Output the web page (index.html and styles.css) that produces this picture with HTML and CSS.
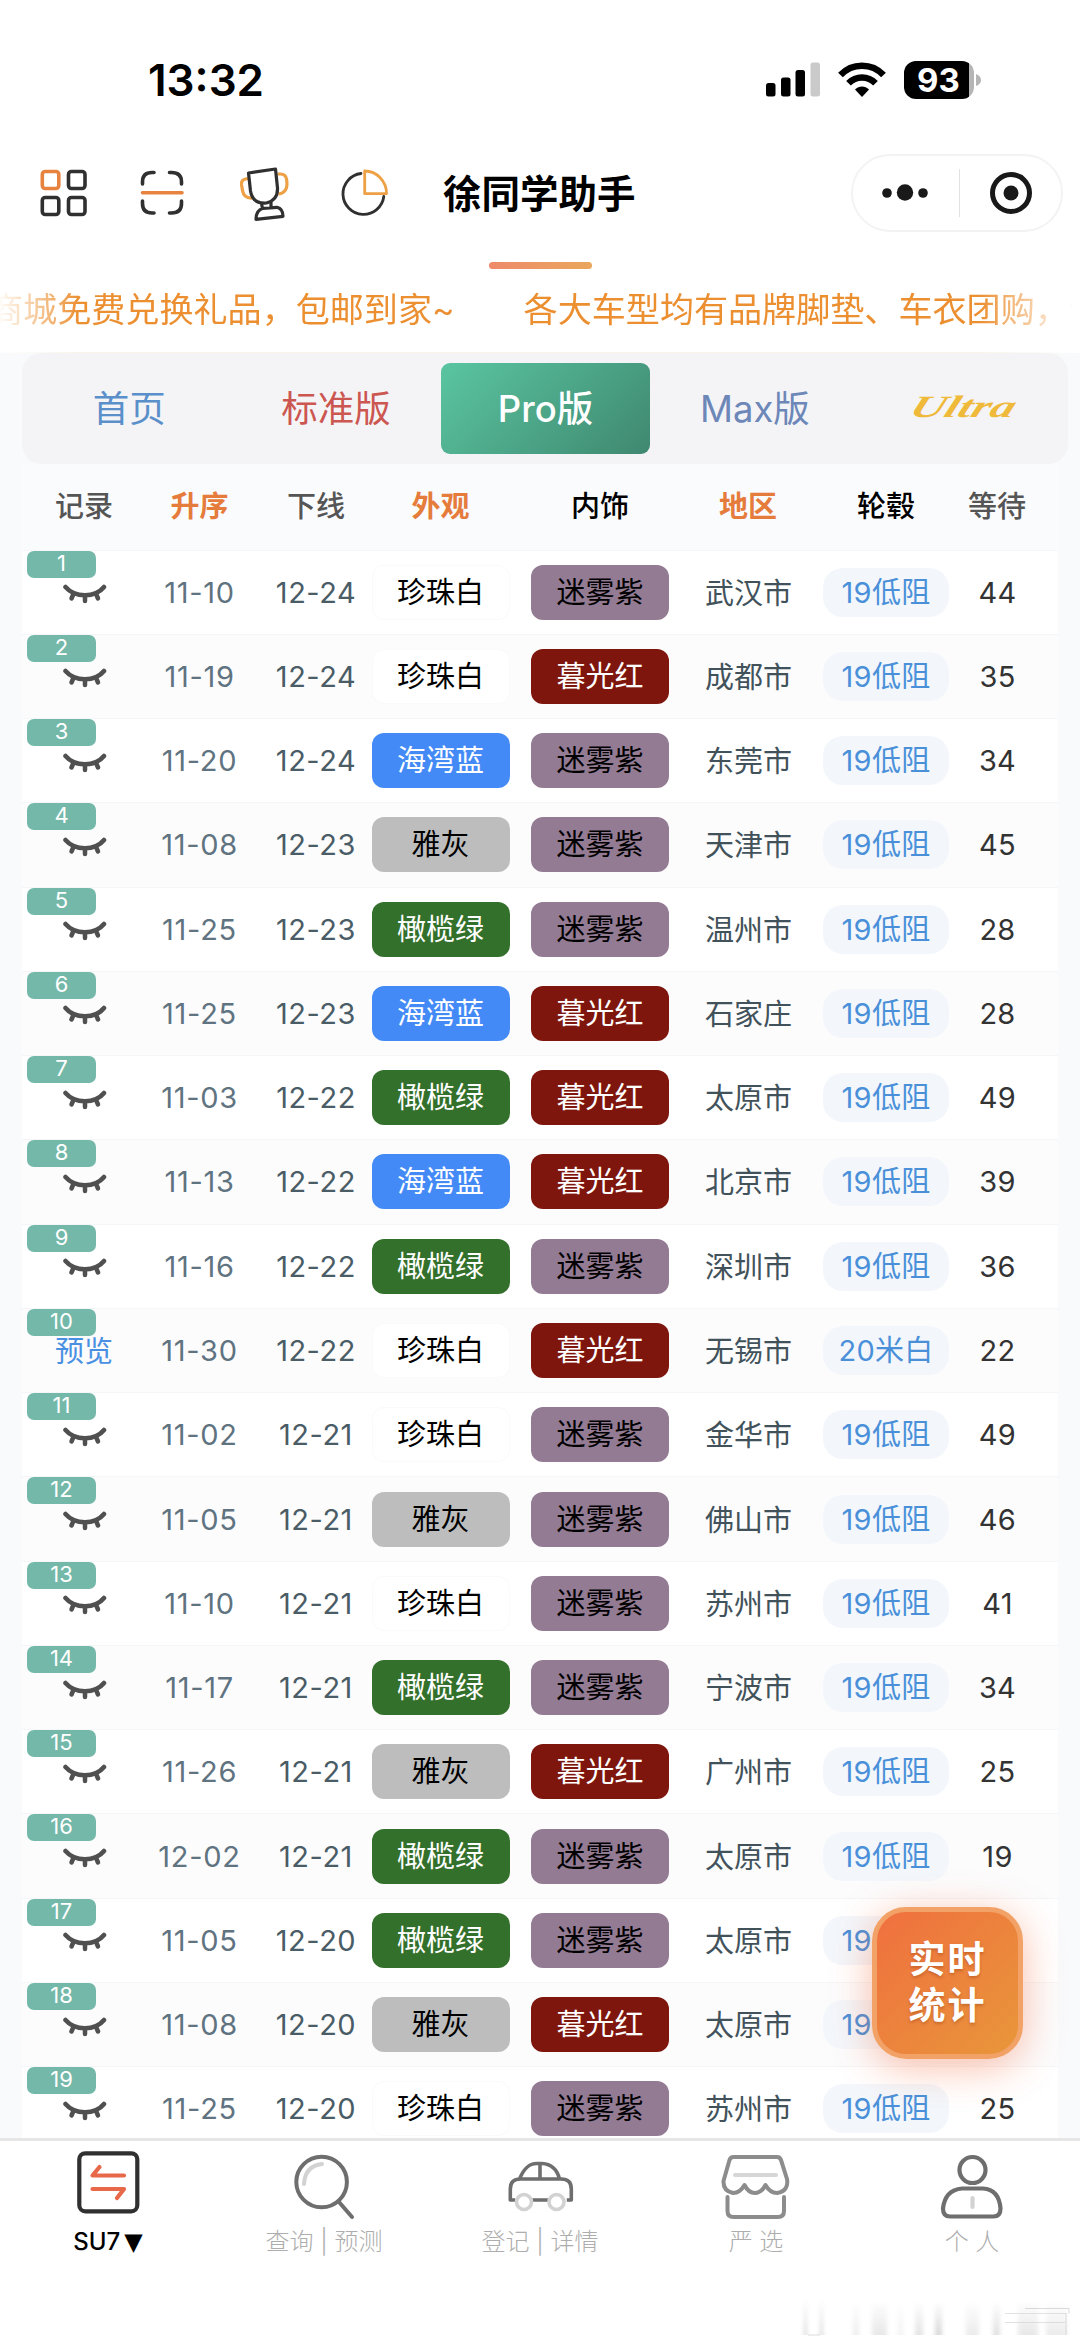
FILE: index.html
```html
<!DOCTYPE html>
<html lang="zh-CN">
<head>
    <meta charset="UTF-8">
    <meta name="viewport" content="width=device-width, initial-scale=1.0">
    <title>徐同学助手</title>
    <link rel="stylesheet" href="styles.css">
</head>
<body>
    <svg width="0" height="0" class="defs">
        <symbol id="eye" viewBox="0 0 44 20">
            <g fill="none" stroke="#505050" stroke-width="4.500" stroke-linecap="round">
                <path d="M2.500 3C12 14 32 14 41 3"></path>
                <path d="M10 11l-1.500 3.500M22 12.500v4.500M33.500 11l1.500 3.500"></path>
            </g>
        </symbol>
    </svg>

    <!-- 状态栏 -->
    <div class="status-bar">
        <div class="time">13:32</div>
        <div class="status-icons">
            <svg width="54" height="36" viewBox="0 0 54 36">
                <rect x="0" y="21" width="9.500" height="13.500" rx="2.500"></rect>
                <rect x="15" y="15.500" width="9.500" height="19" rx="2.500"></rect>
                <rect x="29.500" y="8" width="9.500" height="26.500" rx="2.500"></rect>
                <rect x="44.500" y="0.500" width="9.500" height="34" rx="2.500" fill="#cacaca"></rect>
            </svg>
            <svg class="wifi" width="48" height="36" viewBox="0 0 48 36">
                <g fill="none" stroke="#000" stroke-width="6.500">
                    <path d="M2.500 13C14 0.500 34 0.500 45.500 13"></path>
                    <path d="M10.500 21.300C18 13.700 30 13.700 37.500 21.300"></path>
                </g>
                <path d="M24 35l-7-7.500c4-4 10-4 14 0z"></path>
            </svg>
            <div class="battery"><span>93</span></div>
            <svg class="nub" width="5" height="12" viewBox="0 0 5 12"><path d="M0 0q5 2 5 6t-5 6z" fill="#b5b5b5"></path></svg>
        </div>
    </div>

    <!-- 导航栏 -->
    <div class="nav-bar">
        <div class="nav-icons">
            <svg width="50" height="56" viewBox="0 0 50 56" fill="none" stroke="#303030" stroke-width="3.600">
                <rect x="3.300" y="6.500" width="16.500" height="17" rx="3" stroke="#e8833f"></rect>
                <rect x="29.500" y="6.500" width="16.500" height="17" rx="3"></rect>
                <rect x="3.300" y="32.500" width="16.500" height="17" rx="3"></rect>
                <rect x="29.500" y="32.500" width="16.500" height="17" rx="3"></rect>
            </svg>
            <svg width="50" height="56" viewBox="0 0 50 56" fill="none" stroke="#303030" stroke-width="3.600" stroke-linecap="round">
                <path d="M4.500 19v-2q0-9.500 9.500-9.500h2M31.500 7.500h2q10 0 10 9.500v2M4.500 36v2.500q0 9.500 9.500 9.500h2M31.500 48h2q10 0 10-9.500v-2.500"></path>
                <path d="M4.500 27.800h39.500" stroke="#e8833f"></path>
            </svg>
            <svg width="54" height="56" viewBox="0 0 54 56" fill="none" stroke="#303030" stroke-width="3.200" stroke-linejoin="round">
                <path d="M11.500 13.500l-3 .5q-4.500 1-4 5.500l1 6q1.500 8 9.500 7.500" stroke="#eea044"></path>
                <path d="M40.500 9h3q5 0 6 5 2.500 13.500-8 15" stroke="#eea044"></path>
                <path d="M11.500 8l27-4 2 19q.5 12-11 15-14 1-16-12z"></path>
                <path d="M24.500 38l1 6M34 37v6M19 54.300l27-3q0-7.500-6-9l-14 1q-7 2-7 11z"></path>
            </svg>
            <svg width="50" height="56" viewBox="0 0 50 56" fill="none" stroke="#303030" stroke-width="2.800" stroke-linecap="round" stroke-linejoin="round">
                <path d="M21 8.500A20.500 20.500 0 1 0 43.800 31.500"></path>
                <path d="M24.700 6v22.700h21.800A22 22.500 0 0 0 24.700 6z" stroke="#eea044"></path>
            </svg>
        </div>
        <h1 class="nav-title">徐同学助手</h1>
        <div class="capsule">
            <svg width="46" height="18" viewBox="0 0 46 18" fill="#191919">
                <circle cx="5" cy="9" r="4.800"></circle>
                <circle cx="23" cy="8.500" r="8.200"></circle>
                <circle cx="41" cy="9" r="4.800"></circle>
            </svg>
            <span class="capsule-line"></span>
            <svg width="42" height="42" viewBox="0 0 42 42">
                <circle cx="21" cy="21" r="18.500" fill="none" stroke="#191919" stroke-width="5"></circle>
                <circle cx="21" cy="21" r="7.500" fill="#191919"></circle>
            </svg>
        </div>
    </div>
    <div class="indicator"></div>

    <!-- 滚动公告 -->
    <div class="notice">
        <span>商城免费兑换礼品，包邮到家~</span>
        <span>各大车型均有品牌脚垫、车衣团购，详</span>
    </div>

    <div class="content">
        <div class="tabs">
            <div class="tab home">首页</div>
            <div class="tab standard">标准版</div>
            <div class="tab active">Pro版</div>
            <div class="tab max">Max版</div>
            <div class="tab ultra"><span>Ultra</span></div>
        </div>

        <div class="table">
            <div class="row head">
                <div>记录</div>
                <div class="sort">升序</div>
                <div class="off">下线</div>
                <div class="sort">外观</div>
                <div class="dark">内饰</div>
                <div class="sort">地区</div>
                <div class="dark">轮毂</div>
                <div>等待</div>
            </div>
            <div class="row">
                <div class="record"><span class="num">1</span><svg class="eye"><use href="#eye"></use></svg></div>
                <div class="date">11-10</div><div class="off">12-24</div>
                <div class="chip white">珍珠白</div><div class="chip purple">迷雾紫</div>
                <div class="city">武汉市</div><div class="wheel">19低阻</div><div class="wait">44</div>
            </div>
            <div class="row">
                <div class="record"><span class="num">2</span><svg class="eye"><use href="#eye"></use></svg></div>
                <div class="date">11-19</div><div class="off">12-24</div>
                <div class="chip white">珍珠白</div><div class="chip red">暮光红</div>
                <div class="city">成都市</div><div class="wheel">19低阻</div><div class="wait">35</div>
            </div>
            <div class="row">
                <div class="record"><span class="num">3</span><svg class="eye"><use href="#eye"></use></svg></div>
                <div class="date">11-20</div><div class="off">12-24</div>
                <div class="chip blue">海湾蓝</div><div class="chip purple">迷雾紫</div>
                <div class="city">东莞市</div><div class="wheel">19低阻</div><div class="wait">34</div>
            </div>
            <div class="row">
                <div class="record"><span class="num">4</span><svg class="eye"><use href="#eye"></use></svg></div>
                <div class="date">11-08</div><div class="off">12-23</div>
                <div class="chip gray">雅灰</div><div class="chip purple">迷雾紫</div>
                <div class="city">天津市</div><div class="wheel">19低阻</div><div class="wait">45</div>
            </div>
            <div class="row">
                <div class="record"><span class="num">5</span><svg class="eye"><use href="#eye"></use></svg></div>
                <div class="date">11-25</div><div class="off">12-23</div>
                <div class="chip green">橄榄绿</div><div class="chip purple">迷雾紫</div>
                <div class="city">温州市</div><div class="wheel">19低阻</div><div class="wait">28</div>
            </div>
            <div class="row">
                <div class="record"><span class="num">6</span><svg class="eye"><use href="#eye"></use></svg></div>
                <div class="date">11-25</div><div class="off">12-23</div>
                <div class="chip blue">海湾蓝</div><div class="chip red">暮光红</div>
                <div class="city">石家庄</div><div class="wheel">19低阻</div><div class="wait">28</div>
            </div>
            <div class="row">
                <div class="record"><span class="num">7</span><svg class="eye"><use href="#eye"></use></svg></div>
                <div class="date">11-03</div><div class="off">12-22</div>
                <div class="chip green">橄榄绿</div><div class="chip red">暮光红</div>
                <div class="city">太原市</div><div class="wheel">19低阻</div><div class="wait">49</div>
            </div>
            <div class="row">
                <div class="record"><span class="num">8</span><svg class="eye"><use href="#eye"></use></svg></div>
                <div class="date">11-13</div><div class="off">12-22</div>
                <div class="chip blue">海湾蓝</div><div class="chip red">暮光红</div>
                <div class="city">北京市</div><div class="wheel">19低阻</div><div class="wait">39</div>
            </div>
            <div class="row">
                <div class="record"><span class="num">9</span><svg class="eye"><use href="#eye"></use></svg></div>
                <div class="date">11-16</div><div class="off">12-22</div>
                <div class="chip green">橄榄绿</div><div class="chip purple">迷雾紫</div>
                <div class="city">深圳市</div><div class="wheel">19低阻</div><div class="wait">36</div>
            </div>
            <div class="row">
                <div class="record"><span class="num">10</span><a class="preview">预览</a></div>
                <div class="date">11-30</div><div class="off">12-22</div>
                <div class="chip white">珍珠白</div><div class="chip red">暮光红</div>
                <div class="city">无锡市</div><div class="wheel">20米白</div><div class="wait">22</div>
            </div>
            <div class="row">
                <div class="record"><span class="num">11</span><svg class="eye"><use href="#eye"></use></svg></div>
                <div class="date">11-02</div><div class="off">12-21</div>
                <div class="chip white">珍珠白</div><div class="chip purple">迷雾紫</div>
                <div class="city">金华市</div><div class="wheel">19低阻</div><div class="wait">49</div>
            </div>
            <div class="row">
                <div class="record"><span class="num">12</span><svg class="eye"><use href="#eye"></use></svg></div>
                <div class="date">11-05</div><div class="off">12-21</div>
                <div class="chip gray">雅灰</div><div class="chip purple">迷雾紫</div>
                <div class="city">佛山市</div><div class="wheel">19低阻</div><div class="wait">46</div>
            </div>
            <div class="row">
                <div class="record"><span class="num">13</span><svg class="eye"><use href="#eye"></use></svg></div>
                <div class="date">11-10</div><div class="off">12-21</div>
                <div class="chip white">珍珠白</div><div class="chip purple">迷雾紫</div>
                <div class="city">苏州市</div><div class="wheel">19低阻</div><div class="wait">41</div>
            </div>
            <div class="row">
                <div class="record"><span class="num">14</span><svg class="eye"><use href="#eye"></use></svg></div>
                <div class="date">11-17</div><div class="off">12-21</div>
                <div class="chip green">橄榄绿</div><div class="chip purple">迷雾紫</div>
                <div class="city">宁波市</div><div class="wheel">19低阻</div><div class="wait">34</div>
            </div>
            <div class="row">
                <div class="record"><span class="num">15</span><svg class="eye"><use href="#eye"></use></svg></div>
                <div class="date">11-26</div><div class="off">12-21</div>
                <div class="chip gray">雅灰</div><div class="chip red">暮光红</div>
                <div class="city">广州市</div><div class="wheel">19低阻</div><div class="wait">25</div>
            </div>
            <div class="row">
                <div class="record"><span class="num">16</span><svg class="eye"><use href="#eye"></use></svg></div>
                <div class="date">12-02</div><div class="off">12-21</div>
                <div class="chip green">橄榄绿</div><div class="chip purple">迷雾紫</div>
                <div class="city">太原市</div><div class="wheel">19低阻</div><div class="wait">19</div>
            </div>
            <div class="row">
                <div class="record"><span class="num">17</span><svg class="eye"><use href="#eye"></use></svg></div>
                <div class="date">11-05</div><div class="off">12-20</div>
                <div class="chip green">橄榄绿</div><div class="chip purple">迷雾紫</div>
                <div class="city">太原市</div><div class="wheel">19低阻</div><div class="wait"></div>
            </div>
            <div class="row">
                <div class="record"><span class="num">18</span><svg class="eye"><use href="#eye"></use></svg></div>
                <div class="date">11-08</div><div class="off">12-20</div>
                <div class="chip gray">雅灰</div><div class="chip red">暮光红</div>
                <div class="city">太原市</div><div class="wheel">19低阻</div><div class="wait"></div>
            </div>
            <div class="row">
                <div class="record"><span class="num">19</span><svg class="eye"><use href="#eye"></use></svg></div>
                <div class="date">11-25</div><div class="off">12-20</div>
                <div class="chip white">珍珠白</div><div class="chip purple">迷雾紫</div>
                <div class="city">苏州市</div><div class="wheel">19低阻</div><div class="wait">25</div>
            </div>
        </div>
    </div>

    <!-- 悬浮按钮 -->
    <div class="fab">实时<br>统计</div>

    <!-- 底部导航 -->
    <div class="tabbar">
        <div class="tabbar-item current">
            <svg width="76" height="76" viewBox="0 0 76 76" fill="none" stroke-width="4.200" stroke-linecap="round" stroke-linejoin="round">
                <rect x="9.300" y="9.300" width="58" height="58" rx="6" stroke="#303030"></rect>
                <path d="M54 31.500H22.500l7-8.500M22.500 45H54l-7 9" stroke="#e8694a"></path>
            </svg>
            <span>SU7<i>▼</i></span>
        </div>
        <div class="tabbar-item">
            <svg width="76" height="76" viewBox="0 0 76 76" fill="none" stroke="#6e6e6e" stroke-width="4" stroke-linecap="round">
                <circle cx="35.600" cy="38" r="25.300"></circle>
                <path d="M53 58l13 15"></path>
                <path d="M18 40q1-18 18-20" stroke="#d2d2d2"></path>
            </svg>
            <span>查询 | 预测</span>
        </div>
        <div class="tabbar-item">
            <svg width="76" height="76" viewBox="0 0 76 76" fill="none" stroke="#6e6e6e" stroke-width="3.600" stroke-linejoin="round">
                <path d="M13 56H8.300V45q0-10 10-10h41q10 0 10 10v11h-4.500M30 56h17M17.500 35C22 24 27 19.500 35 19.500h5C49 20 55 25 57.500 35M38 20v15"></path>
                <circle cx="22" cy="58" r="7.500" stroke="#d2d2d2"></circle>
                <circle cx="54.500" cy="58" r="7.500" stroke="#d2d2d2"></circle>
            </svg>
            <span>登记 | 详情</span>
        </div>
        <div class="tabbar-item">
            <svg width="76" height="76" viewBox="0 0 76 76" fill="none" stroke="#8c8c8c" stroke-width="4" stroke-linecap="round" stroke-linejoin="round">
                <path d="M17 13h42q3 0 4 3l6 19q2 12-10 14-7 0-11.500-8-4 8-10.500 8t-10.500-8q-4.500 8-11.500 8-10-2-9.500-12l6-21q1-3 4-3z"></path>
                <path d="M9.500 53v14q0 6 6 6H60q6 0 6-6V53"></path>
                <path d="M17 31h41" stroke="#d6d6d6"></path>
            </svg>
            <span>严 选</span>
        </div>
        <div class="tabbar-item">
            <svg width="76" height="76" viewBox="0 0 76 76" fill="none" stroke="#6e6e6e" stroke-width="4.200" stroke-linecap="round">
                <circle cx="38.500" cy="26" r="13"></circle>
                <path d="M28 44.500h21q16 1 17.500 20 0 8-7 8H16q-7 0-7-8Q11 46 28 44.500z"></path>
                <path d="M38.500 54v9" stroke="#d2d2d2"></path>
            </svg>
            <span>个 人</span>
        </div>
    </div>

    <div class="smear">
        <svg width="280" height="46" viewBox="0 0 280 46">
            <defs>
                <linearGradient id="fade" x1="0" y1="0" x2="0" y2="1">
                    <stop offset="0" stop-color="#999" stop-opacity="0"></stop>
                    <stop offset="1" stop-color="#999" stop-opacity=".55"></stop>
                </linearGradient>
                <filter id="soft"><feGaussianBlur stdDeviation="2 .3"></feGaussianBlur></filter>
            </defs>
            <g fill="url(#fade)" filter="url(#soft)">
                <rect x="4" y="0" width="3" height="36"></rect>
                <rect x="20" y="0" width="3" height="36"></rect>
                <rect x="53" y="2" width="6" height="34" opacity=".45"></rect>
                <rect x="72" y="2" width="15" height="34" opacity=".6"></rect>
                <rect x="98" y="4" width="5" height="32" opacity=".35"></rect>
                <rect x="115" y="2" width="8" height="34" opacity=".7"></rect>
                <rect x="135" y="2" width="7" height="34"></rect>
                <rect x="166" y="2" width="13" height="34" opacity=".5"></rect>
                <rect x="193" y="2" width="7" height="34" opacity=".8"></rect>
                <rect x="218" y="2" width="20" height="34" opacity=".6"></rect>
                <rect x="246" y="2" width="21" height="34" opacity=".5"></rect>
            </g>
            <path d="M8 36h12" stroke="#ccc"></path>
            <path d="M205 14.500h61M205 23.500h60" stroke="#bbb" opacity=".6"></path>
            <path d="M225 9.500h44v5M266 14v22" fill="none" stroke="#aaa" opacity=".6"></path>
        </svg>
    </div>
</body>
</html>
```
FILE: styles.css
```css
* {
    margin: 0;
    padding: 0;
    box-sizing: border-box;
}

body {
    width: 1080px;
    height: 2347px;
    overflow: hidden;
    position: relative;
    background: #fff;
    font-family: Inter, 'Noto Sans CJK SC', sans-serif;
    color: #000;
}

.defs {
    position: absolute;
}

/* 状态栏 */
.status-bar {
    height: 140px;
    padding: 20px 99px 0 148px;
    display: flex;
    align-items: center;
    justify-content: space-between;
}

.time {
    font-size: 44px;
    font-weight: 600;
}

.status-icons {
    display: flex;
    align-items: center;
}

.wifi {
    margin: 0 18px 0 18px;
}

.battery {
    width: 70px;
    height: 38px;
    border-radius: 12px;
    background: linear-gradient(90deg, #000 65px, #b5b5b5 65px);
    color: #fff;
    font-size: 33px;
    font-weight: 700;
    line-height: 38px;
    padding-left: 13px;
}

.nub {
    margin-left: 2px;
}

/* 导航栏 */
.nav-bar {
    height: 105px;
    padding: 0 17px 0 39px;
    display: flex;
    align-items: center;
}

.nav-icons {
    display: flex;
    gap: 49px;
    width: 404px;
    height: 56px;
}

.nav-title {
    font-size: 38.500px;
    font-weight: 700;
    flex: 1;
    padding-bottom: 4px;
}

.capsule {
    width: 212px;
    height: 78px;
    border: 2px solid #f3f3f3;
    border-radius: 39px;
    display: flex;
    align-items: center;
    padding: 0 29px 0 29px;
    justify-content: space-between;
}

.capsule-line {
    width: 1px;
    height: 48px;
    margin-left: 1px;
    background: #e2e2e2;
}

.indicator {
    width: 103px;
    height: 7px;
    margin: 17px 0 0 489px;
    border-radius: 4px;
    background: linear-gradient(90deg, #ee8a6a, #eaa75c);
}

/* 公告 */
.notice {
    height: 84px;
    padding-bottom: 8px;
    display: flex;
    align-items: center;
    gap: 69px;
    margin-left: -11px;
    width: 1091px;
    overflow: hidden;
    white-space: nowrap;
    font-size: 34.100px;
    color: #ec8f31;
    border-bottom: 1px solid #f9f5ea;
    -webkit-mask-image: linear-gradient(90deg, transparent 8px, #000 90px, #000 990px, transparent 1085px);
    mask-image: linear-gradient(90deg, transparent 8px, #000 90px, #000 990px, transparent 1085px);
}

.content {
    height: 1785px;
    background: #f9fafc;
    overflow: hidden;
}

/* 版本切换 */
.tabs {
    display: flex;
    margin: 0 12px 0 22px;
    height: 111px;
    padding: 10px 0;
    border-radius: 20px;
    background: #f4f4f7;
}

.tab {
    flex: 1;
    display: flex;
    align-items: center;
    justify-content: center;
    font-size: 36.500px;
    border-radius: 9px;
    padding-bottom: 4px;
}

.home {
    color: #5a8fca;
    text-indent: 5px;
}

.standard {
    color: #cc5650;
}

.tab.active {
    color: #fff;
    font-weight: 500;
    background: linear-gradient(135deg, #5ac5a1, #3f8870);
}

.max {
    color: #6d87b8;
    margin-right: -1px;
}

.ultra span {
    font-family: 'Liberation Serif', serif;
    font-size: 31px;
    font-style: italic;
    font-weight: 700;
    color: #efb93a;
    transform: scaleX(1.550) skewX(-14deg);
}

/* 表格 */
.table {
    margin: 0 22px;
    width: 1036px;
}

.row {
    display: grid;
    grid-template-columns: 124px 107px 118px 139px 180px 116px 160px 62px;
    align-items: center;
    justify-items: center;
    height: 84.280px;
    background: #fff;
    border-top: 1px solid #f5f6f8;
    font-size: 29px;
    white-space: nowrap;
}

.row:nth-child(odd) {
    background: #fcfcfd;
}

.row.head {
    height: 85.500px;
    padding-bottom: 6px;
    border-top: none;
    background: #fafbfd;
    font-weight: 500;
    color: #555;
}

.head .sort {
    color: #e57c3c;
    font-weight: 700;
}

.head .dark {
    color: #000;
}

.record {
    position: relative;
    width: 100%;
    height: 100%;
    display: flex;
    align-items: center;
    justify-content: center;
}

.num {
    position: absolute;
    left: 5px;
    top: 0;
    width: 69px;
    height: 27px;
    border-radius: 7px;
    background: #74b8a9;
    color: #fff;
    font-size: 22px;
    line-height: 25px;
    text-align: center;
}

.eye {
    width: 44px;
    height: 20px;
    margin: 4px 0 0 2px;
}

.preview {
    color: #4a90e2;
    padding-bottom: 3px;
}

.date {
    color: #5f7380;
    letter-spacing: 0.7px;
}

.off {
    color: #4a5c66;
    padding-left: 8px;
    letter-spacing: 0.5px;
}

.head .off {
    color: #555;
    letter-spacing: 0;
}

.chip {
    width: 138px;
    height: 55px;
    line-height: 55px;
    border-radius: 12px;
    text-align: center;
}

.white {
    background: #fff;
    border: 1px solid #fafafa;
    line-height: 53px;
}

.purple {
    background: #937b94;
}

.red {
    background: #7e160d;
    color: #fff;
}

.blue {
    background: #448af7;
    color: #fff;
}

.green {
    background: #33702b;
    color: #fff;
}

.gray {
    background: #bdbdbd;
}

.city {
    color: #42525b;
    padding-bottom: 3px;
    margin-left: 1px;
}

.wheel {
    width: 126px;
    height: 49px;
    line-height: 49px;
    border-radius: 20px;
    text-align: center;
    color: #4a90d9;
    background: #f3f7fc;
    letter-spacing: 0.3px;
}

.wait {
    color: #333;
    margin-left: 1px;
    letter-spacing: 0.3px;
}

/* 悬浮按钮 */
.fab {
    position: absolute;
    left: 872px;
    top: 1907px;
    width: 151px;
    height: 152px;
    padding: 25px 0 0 0;
    border: 5px solid #f2a267;
    border-radius: 34px;
    background: linear-gradient(135deg, #f0703f, #e8963a);
    box-shadow: 0 8px 40px rgba(242, 100, 50, 0.42);
    color: #fff;
    font-size: 37px;
    font-weight: 700;
    letter-spacing: 2px;
    line-height: 46px;
    text-align: center;
    text-shadow: 0 2px 3px rgba(120, 40, 0, 0.3);
}

/* 底部导航 */
.tabbar {
    position: relative;
    height: 210px;
    display: flex;
    background: #fff;
    border-top: 3px solid #e6e6e6;
}

.tabbar-item {
    flex: 1;
    display: flex;
    flex-direction: column;
    align-items: center;
    padding-top: 3px;
    font-size: 24px;
    font-weight: 300;
    color: #adadad;
}

.tabbar-item span {
    margin-top: 5px;
    line-height: 34px;
}

.tabbar-item.current {
    color: #000;
    font-weight: 500;
}

.tabbar-item i {
    font-style: normal;
    font-family: 'DejaVu Sans', sans-serif;
    margin-left: 4px;
}

.smear {
    position: absolute;
    left: 800px;
    top: 2299px;
    opacity: 0.7;
}
```
